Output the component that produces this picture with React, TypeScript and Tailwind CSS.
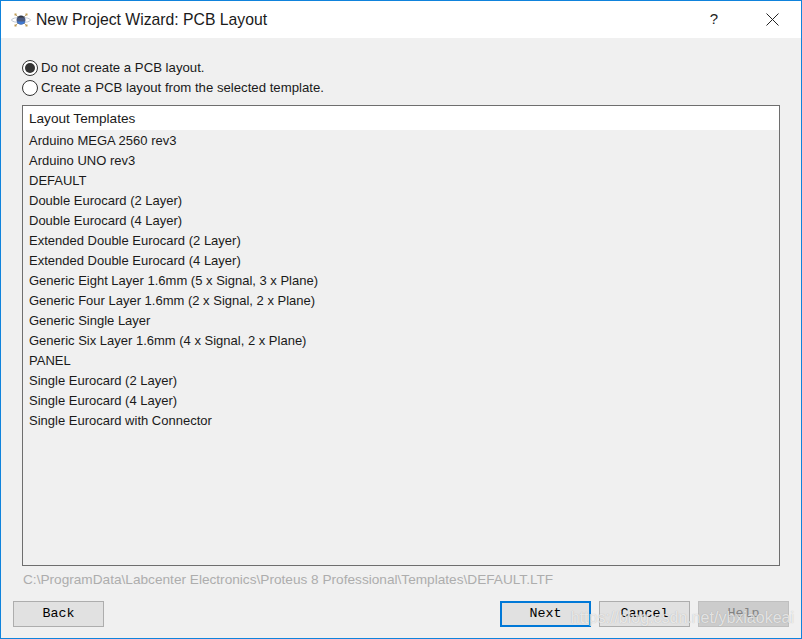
const templates = [
  'Arduino MEGA 2560 rev3',
  'Arduino UNO rev3',
  'DEFAULT',
  'Double Eurocard (2 Layer)',
  'Double Eurocard (4 Layer)',
  'Extended Double Eurocard (2 Layer)',
  'Extended Double Eurocard (4 Layer)',
  'Generic Eight Layer 1.6mm (5 x Signal, 3 x Plane)',
  'Generic Four Layer 1.6mm (2 x Signal, 2 x Plane)',
  'Generic Single Layer',
  'Generic Six Layer 1.6mm (4 x Signal, 2 x Plane)',
  'PANEL',
  'Single Eurocard (2 Layer)',
  'Single Eurocard (4 Layer)',
  'Single Eurocard with Connector',
];

function AppIcon() {
  return (
    <svg width="20" height="16" viewBox="0 0 20 16" className="shrink-0">
      <ellipse cx="10" cy="8" rx="9.5" ry="2.6" fill="none" stroke="#c3cad6" strokeWidth="1" />
      <path d="M4 2 L16 14 M16 2 L4 14" stroke="#b3a88f" strokeWidth="1" />
      <rect x="3.5" y="1.5" width="2" height="2" fill="#c09a50" />
      <rect x="14.5" y="1.5" width="2" height="2" fill="#c09a50" />
      <rect x="3.5" y="12.5" width="2" height="2" fill="#c09a50" />
      <rect x="14.5" y="12.5" width="2" height="2" fill="#c09a50" />
      <circle cx="10" cy="8" r="4.5" fill="#4a5a80" />
      <path d="M5.8 9.5 A4.5 4.5 0 0 0 14.2 9.5 Z" fill="#3f78d0" />
      <path d="M6.5 5.5 A4.5 4.5 0 0 1 13.5 5.5 Z" fill="#33353d" />
    </svg>
  );
}

function Radio({ checked, label }: { checked?: boolean; label: string }) {
  return (
    <div className="flex items-center h-5">
      <div className="w-4 h-4 rounded-full border border-[#333] bg-white flex items-center justify-center shrink-0">
        {checked && <div className="w-2.5 h-2.5 rounded-full bg-[#333]" />}
      </div>
      <span className="ml-[3px] text-[13.2px] text-[#1a1a1a]">{label}</span>
    </div>
  );
}

function WizardButton({ label, variant }: { label: string; variant?: 'default' | 'disabled' }) {
  const base = 'w-[91px] h-[26px] font-["Liberation_Mono",monospace] text-[13.33px] flex items-center justify-center';
  if (variant === 'default') {
    return <button className={`${base} border-2 border-[#0078d7] bg-[#e1e1e1] text-black`}>{label}</button>;
  }
  if (variant === 'disabled') {
    return <button className={`${base} border border-[#bfbfbf] bg-[#cccccc] text-[#838383]`}>{label}</button>;
  }
  return <button className={`${base} border border-[#adadad] bg-[#e1e1e1] text-black`}>{label}</button>;
}

export default function App() {
  return (
    <div className='relative w-[802px] h-[639px] border border-[#0f83dc] bg-[#f0f0f0] font-["Liberation_Sans",Arial,sans-serif] text-[13px] overflow-hidden flex flex-col'>
      <header className="h-[37px] bg-white flex items-center pl-[10px] shrink-0">
        <AppIcon />
        <h1 className="ml-[5px] text-[15.75px] text-[#1a1a1a] font-normal">New Project Wizard: PCB Layout</h1>
        <div className="ml-auto flex items-center mr-[6px]">
          <span className="w-[46px] mr-[12px] text-center text-[15px] text-[#222]">?</span>
          <button className="w-[46px] h-[30px] flex items-center justify-center">
            <svg width="13" height="13" viewBox="0 0 13 13">
              <path d="M0.5 0.5 L12.5 12.5 M12.5 0.5 L0.5 12.5" stroke="#222" strokeWidth="1" />
            </svg>
          </button>
        </div>
      </header>

      <main className="flex-1 flex flex-col pt-[20px] px-[12px] pb-[11px] min-h-0">
        <div className="pl-[9px]">
          <Radio checked label="Do not create a PCB layout." />
          <Radio label="Create a PCB layout from the selected template." />
        </div>

        <div className="mt-[7px] mx-[9px] h-[461px] border border-[#6e6e6e] flex flex-col shrink-0">
          <div className="h-[24px] bg-white pl-[6px] leading-[25px] text-[13.6px] text-[#1a1a1a] shrink-0">Layout Templates</div>
          <ul>
            {templates.map((t) => (
              <li key={t} className="h-5 pl-[6px] leading-[21px] text-[#1a1a1a] whitespace-nowrap">{t}</li>
            ))}
          </ul>
        </div>

        <div className="mt-[4px] ml-[10px] h-5 flex items-center text-[13.65px] text-[#adadad] whitespace-nowrap">
          C:\ProgramData\Labcenter Electronics\Proteus 8 Professional\Templates\DEFAULT.LTF
        </div>

        <div className="mt-auto flex items-center">
          <WizardButton label="Back" />
          <div className="ml-auto flex gap-2">
            <WizardButton label="Next" variant="default" />
            <WizardButton label="Cancel" />
            <WizardButton label="Help" variant="disabled" />
          </div>
        </div>
      </main>

      <span className="absolute right-[7px] bottom-[8px] text-[16px] text-white/70 [text-shadow:0_0_1px_rgba(90,90,90,0.4)] whitespace-nowrap pointer-events-none">
        https://blog.csdn.net/ybxiaokeai
      </span>
    </div>
  );
}
